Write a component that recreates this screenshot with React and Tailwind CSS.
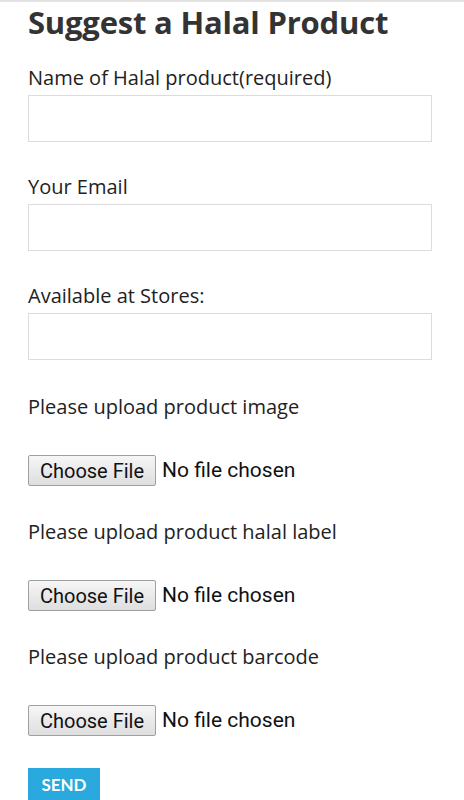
import React from 'react'

const FIELDS = ['Name of Halal product(required)', 'Your Email', 'Available at Stores:']
const UPLOADS = [
  'Please upload product image',
  'Please upload product halal label',
  'Please upload product barcode',
]

function FakeFile() {
  return (
    <div className="flex items-center gap-[6px] h-[31px]">
      <span
        className="h-[31px] w-[128px] flex items-center justify-center rounded-[2px] border border-[#a0a0a0] bg-gradient-to-b from-[#f6f6f6] to-[#dedede] text-[20px] text-[#111]"
        style={{ fontFamily: 'Roboto, sans-serif' }}
      >
        Choose File
      </span>
      <span className="text-[21px] text-[#111]" style={{ fontFamily: 'Roboto, sans-serif' }}>
        No file chosen
      </span>
    </div>
  )
}

export default function App() {
  return (
    <div className="w-[464px] h-[800px] overflow-hidden bg-white border-t-2 border-[#e2e2e2]">
      <div className="pl-[28px] pr-[32px] font-['Open_Sans',sans-serif] text-[#222]">
        <h1 className="mt-[1px] text-[31px] leading-[38px] font-bold text-[#333] font-['Open_Sans',sans-serif] tracking-[-0.2px] whitespace-nowrap">
          Suggest a Halal Product
        </h1>

        {FIELDS.map((label, i) => (
          <div key={i} className={i === 0 ? 'mt-[25px]' : 'mt-[33px]'}>
            <label className="block text-[20px] leading-[24px]">{label}</label>
            <input
              type="text"
              className="mt-[5px] block w-[404px] h-[47px] border border-[#dcdcdc] bg-white outline-none"
            />
          </div>
        ))}

        {UPLOADS.map((label, i) => (
          <div key={i} className={i === 0 ? 'mt-[35px]' : 'mt-[34px]'}>
            <p className="text-[20px] leading-[24px]">{label}</p>
            <div className="mt-[36px]">
              <FakeFile />
            </div>
          </div>
        ))}

        <button className="mt-[32px] h-[34px] w-[72px] bg-[#29a9dd] text-white text-[17px] font-bold font-['Lato',sans-serif] flex items-center justify-center">
          SEND
        </button>
      </div>
    </div>
  )
}
